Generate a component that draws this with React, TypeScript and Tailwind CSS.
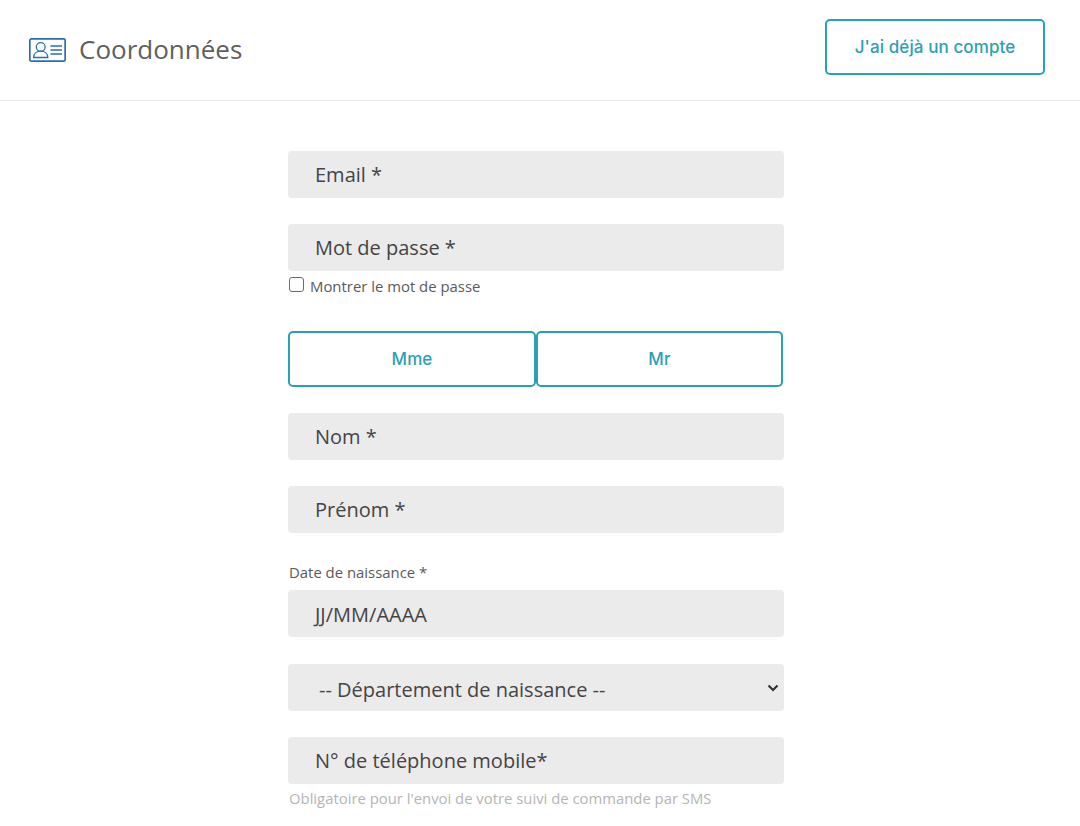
import React from "react";

const Field = ({ children, className = "" }: { children: React.ReactNode; className?: string }) => (
  <div className={`h-[47px] w-full rounded-[4px] bg-[#ebebeb] pl-[27px] flex items-center text-[20px] text-[#444444] ${className}`}>
    {children}
  </div>
);

const OutlineButton = ({ children, className = "" }: { children: React.ReactNode; className?: string }) => (
  <button className={`h-[56px] pt-[2px] rounded-[5px] border-2 border-[#2a9fb5] bg-white text-[#2a9fb5] text-[17px] font-medium tracking-[0.1px] font-['Inter',sans-serif] flex items-center justify-center ${className}`}>
    {children}
  </button>
);

export default function App() {
  return (
    <div className="w-[1080px] h-[826px] overflow-hidden bg-white font-['Open_Sans',sans-serif]">
      <header className="h-[101px] border-b border-[#e6e6e6] flex items-center justify-between pl-[29px] pr-[35px]">
        <div className="flex items-center gap-[13px]">
          <svg width="37" height="24" viewBox="0 0 37 24" fill="none" stroke="#2a6db5">
            <rect x="0.85" y="0.85" width="35.3" height="22.3" rx="1.5" strokeWidth="1.7" />
            <circle cx="11.7" cy="9" r="4.4" strokeWidth="1.3" />
            <path d="M4.6 19.5c0-3.8 3-6.3 7.1-6.3s7.1 2.500 7.100 6.300z" strokeWidth="1.3" />
            <path d="M21.500 8h11.500M21.500 12h11.500M21.500 16h11.500" strokeWidth="1.300" />
          </svg>
          <span className="text-[26px] leading-none text-[#606060] mb-[2px]">Coordonnées</span>
        </div>
        <OutlineButton className="w-[220px] mb-[6px]">J'ai déjà un compte</OutlineButton>
      </header>

      <main className="w-[496px] ml-[288px] pt-[50px] flex flex-col">
        <Field>Email *</Field>
        <Field className="mt-[26px]">Mot de passe *</Field>
        <label className="mt-[6px] h-[19px] flex items-center text-[14.9px] text-[#5a5a5a]">
          <span className="ml-[1px] w-[15px] h-[15px] rounded-[3px] border border-[#6b6b6b] bg-white mb-[4px]" />
          <span className="ml-[6px]">Montrer le mot de passe</span>
        </label>
        <div className="mt-[35px] flex">
          <OutlineButton className="w-[248px]">Mme</OutlineButton>
          <OutlineButton className="w-[247px]">Mr</OutlineButton>
        </div>
        <Field className="mt-[26px]">Nom *</Field>
        <Field className="mt-[26px]">Prénom *</Field>
        <div className="mt-[31px] h-[17px] pl-[1px] flex items-center text-[14.9px] text-[#5a5a5a]">Date de naissance *</div>
        <Field className="mt-[9px] pt-[2px]">JJ/MM/AAAA</Field>
        <Field className="mt-[27px] !pl-[31px] justify-between pr-[5px]">
          <span className="pt-[4px]">-- Département de naissance --</span>
          <svg width="12" height="12" viewBox="0 0 12 12" fill="none" stroke="#333333" strokeWidth="2.2" className="mt-[1px]">
            <path d="M1.500 3.500 6 8l4.500-4.500" />
          </svg>
        </Field>
        <Field className="mt-[26px]">N° de téléphone mobile*</Field>
        <div className="mt-[5px] pl-[1px] text-[14.85px] leading-[19px] text-[#b5b5b5]">Obligatoire pour l'envoi de votre suivi de commande par SMS</div>
      </main>
    </div>
  );
}
